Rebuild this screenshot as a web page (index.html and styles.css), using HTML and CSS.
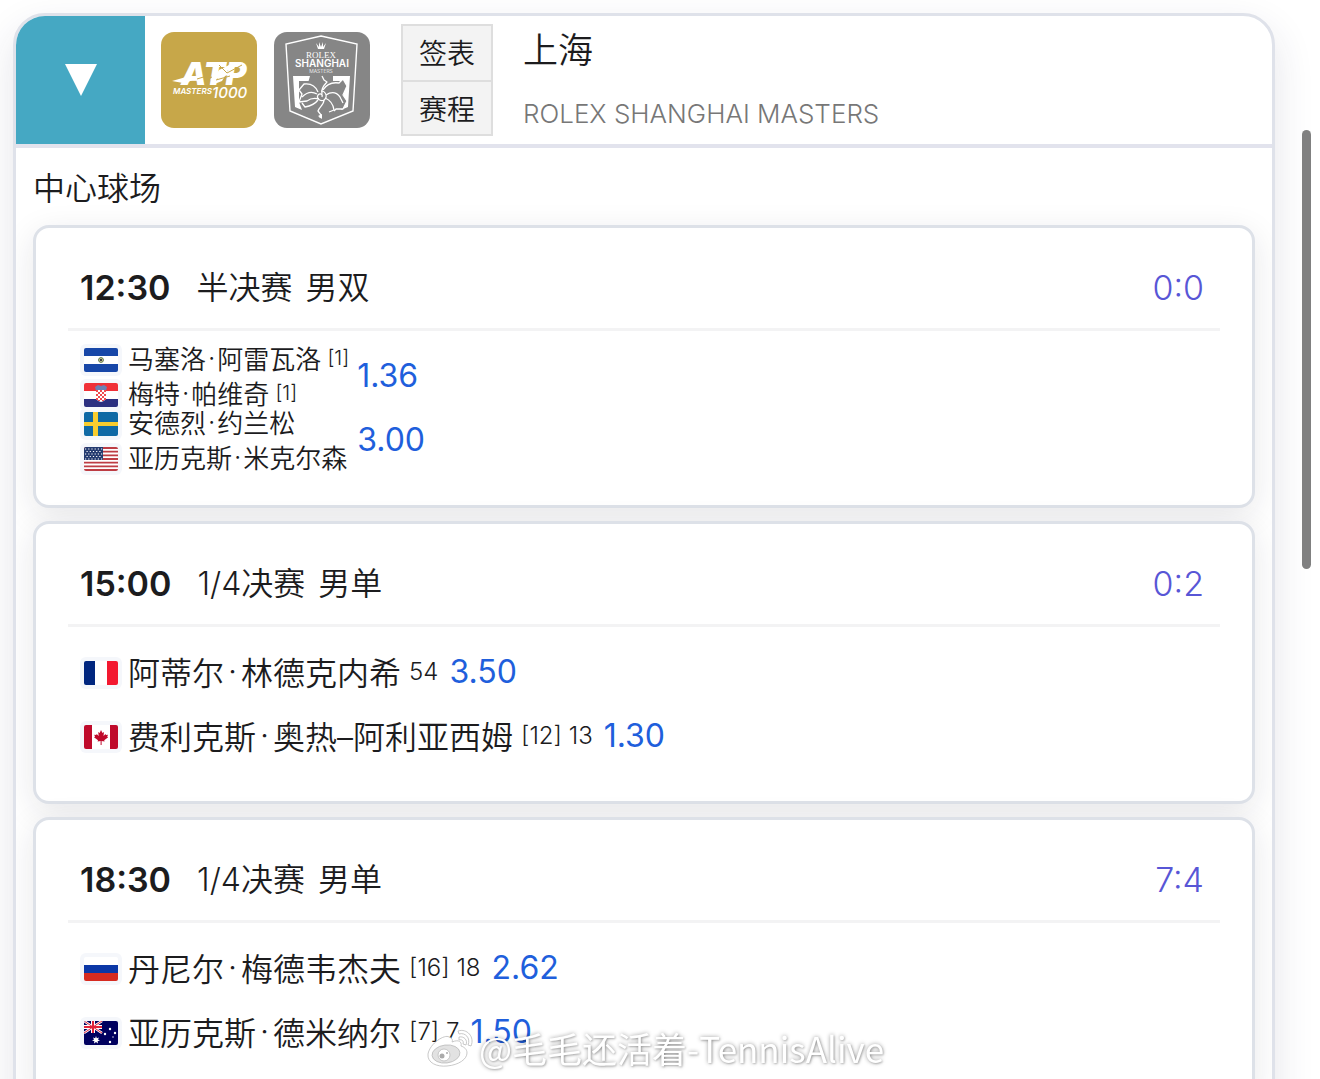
FILE: index.html
```html
<!DOCTYPE html>
<html lang="zh-CN">
<head>
  <meta charset="UTF-8">
  <meta name="viewport" content="width=device-width, initial-scale=1.0">
  <title>上海 - ROLEX SHANGHAI MASTERS</title>
  <link rel="stylesheet" href="styles.css">
</head>
<body>
  <div class="page">
    <div class="tour">
      <div class="tour-header">
        <button type="button" class="toggle" aria-label="收起">
          <svg width="32" height="32" viewBox="0 0 32 32"><path d="M0 0h32L16 32z" fill="#fff"/></svg>
        </button>
        <div class="logos">
          <svg class="logo" viewBox="0 0 96 96">
            <rect width="96" height="96" rx="13" fill="#c7a749"/>
            <g fill="#fff" font-family="Inter, sans-serif" font-style="italic">
              <text x="20" y="53" font-size="32" font-weight="900">ATP</text>
              <text x="12" y="62" font-size="8" font-weight="600">MASTERS</text>
              <text x="51" y="66" font-size="15" font-weight="500">1000</text>
            </g>
            <path d="M11 49l14-4 11 1-9 4-5 1zM58 38l10-5 5 1-7 5 6 2-8 3-3 5-10 4 6-7-8 2 6-5z" fill="#fff"/>
            <path d="M36 47l13-4-6 5 8-3M58 33l8 8 15-8M55 48l14-4" fill="none" stroke="#c7a749"/>
          </svg>
          <svg class="logo" viewBox="0 0 96 96">
            <rect width="96" height="96" rx="13" fill="#868686"/>
            <path d="M47 4l36 8-4 67-32 13-31-13-4-67z" fill="none" stroke="#fff" stroke-width="1.4"/>
            <path d="M44 17l-2-6 3 4 0-5 2 5 2-5 0 5 3-4-2 6z" fill="#fff"/>
            <g fill="#fff" text-anchor="middle">
              <text x="47" y="26" font-family="Liberation Serif, serif" font-size="9">ROLEX</text>
              <text x="48" y="35" font-family="Inter, sans-serif" font-size="10" font-weight="600">SHANGHAI</text>
              <text x="47" y="41" font-family="Inter, sans-serif" font-size="5">MASTERS</text>
            </g>
            <path d="M19 44h17v5H25v21l3 8-7-3zM76 44H59v5h11v21l-3 8 7-3z" fill="#fff"/>
            <g fill="#868686" stroke="#fff" stroke-width="1.300" stroke-linejoin="round">
              <path d="M47 60c-1-7-6-9-13-9l2-7h12l2 4 3 2-3 4z" stroke="none"/>
              <path d="M48 44l2 4 3 2c-5 5-6 8-5 12M49 58c3-5 9-8 16-7l4-4 4 7-4 9 4 6-4 8-7 0-2 2"/>
              <path d="M52 63c6-4 12-3 15 4l2 4M51 66c5 2 8 5 9 12l-5 2"/>
              <path d="M44 60c-2-5-6-9-14-8l-5 6 3 4-3 8 8-1c4-3 8-3 12-2M43 62c-5-3-10-2-15 3"/>
              <path d="M44 68c-3 4-7 6-13 7l-3-4M50 68c0 5-5 7-6 11l3 4-1 3"/>
            </g>
            <path d="M47 59c5 0 7 6 3 9-4 2-8-2-6-5 2-2 5-1 4 2" fill="none" stroke="#fff" stroke-width="1.200"/>
            <path d="M44 84l4-2 0 5z" fill="#fff"/>
          </svg>
        </div>
        <div class="links">
          <button type="button">签表</button>
          <button type="button">赛程</button>
        </div>
        <div class="names">
          <div class="city">上海</div>
          <div class="full-name">ROLEX SHANGHAI MASTERS</div>
        </div>
      </div>

      <div class="court">
        <div class="court-name">中心球场</div>

        <div class="match">
          <div class="match-header">
            <span class="time">12:30</span>
            <span class="round">半决赛</span>
            <span class="type">男双</span>
            <span class="h2h">0:0</span>
          </div>
          <div class="players doubles">
            <div class="team">
              <div class="player">
                <svg class="flag" viewBox="0 0 34 24"><path fill="#1747a8" d="M0 0h34v24H0z"/><path fill="#fff" d="M0 8h34v8H0z"/><circle cx="17" cy="12" r="2.4" fill="#d8d29a" stroke="#56724a"/><path d="M16 11h2v2h-2z" fill="#444"/></svg>
                马塞洛<i>·</i>阿雷瓦洛<small>[1]</small>
              </div>
              <div class="player">
                <svg class="flag" viewBox="0 0 34 24"><path fill="#fff" d="M0 0h34v24H0z"/><path fill="#f03038" d="M0 0h34v8H0z"/><path fill="#2b2f80" d="M0 16h34v8H0z"/><path d="M11 4l3-2 3 1 3-1 3 2-1 4H12z" fill="#6c80b4"/><path d="M12 7h10v7q0 4-5 5-5-1-5-5z" fill="#fff"/><path d="M12 7h2v2h-2zm4 0h2v2h-2zm4 0h2v2h-2zm-6 2h2v2h-2zm4 0h2v2h-2zm-6 2h2v2h-2zm4 0h2v2h-2zm4 0h2v2h-2zm-6 2h2v2h-2zm4 0h2v2h-2zm-6 2h2v2h-2zm4 0h2v2h-2zm4 0h2v2h-2zm-6 2h2v1h-2zm4 0h2v1h-2z" fill="#ef4b50"/></svg>
                梅特<i>·</i>帕维奇<small>[1]</small>
              </div>
            </div>
            <a href="#" class="odds">1.36</a>
            <div class="team">
              <div class="player">
                <svg class="flag" viewBox="0 0 34 24"><path fill="#0f69a5" d="M0 0h34v24H0z"/><path fill="#f7cc2e" d="M9 0h5v24H9z"/><path fill="#f7cc2e" d="M0 10h34v4H0z"/></svg>
                安德烈<i>·</i>约兰松
              </div>
              <div class="player">
                <svg class="flag" viewBox="0 0 34 24"><path fill="#fff" d="M0 0h34v24H0z"/><path d="M0 1h34M0 4.7h34M0 8.4h34M0 12h34M0 15.7h34M0 19.4h34M0 23h34" stroke="#bd3d44" stroke-width="1.8"/><path fill="#253b70" d="M0 0h19v13H0z"/><path d="M1 2h18M2.500 4.500h16M1 7h18M2.500 9.500h16M1 12h18" stroke="#fff" stroke-width="1.2" stroke-dasharray="1.200 2"/></svg>
                亚历克斯<i>·</i>米克尔森
              </div>
            </div>
            <a href="#" class="odds">3.00</a>
          </div>
        </div>

        <div class="match">
          <div class="match-header">
            <span class="time">15:00</span>
            <span class="round">1/4决赛</span>
            <span class="type">男单</span>
            <span class="h2h">0:2</span>
          </div>
          <div class="players">
            <div class="player">
              <svg class="flag" viewBox="0 0 34 24"><path fill="#fff" d="M0 0h34v24H0z"/><path fill="#00267f" d="M0 0h11v24H0z"/><path fill="#f31830" d="M23 0h11v24H23z"/></svg>
              阿蒂尔<i>·</i>林德克内希<small>54</small>
              <a href="#" class="odds">3.50</a>
            </div>
            <div class="player">
              <svg class="flag" viewBox="0 0 34 24"><path fill="#fff" d="M0 0h34v24H0z"/><path fill="#bf0a2b" d="M0 0h8v24H0zM26 0h8v24h-8z"/><path fill="#bf0a2b" d="M17 5l1.500 3 1.500-1-.5 4 2-2 .5 1 2-.3-.8 2 1 .5-4 3 .4 1.400-3-.5V20h-1v-3.900l-3 .5.400-1.400-4-3 1-.5-.8-2 2 .3.500-1 2 2-.5-4 1.500 1z"/></svg>
              费利克斯<i>·</i>奥热–阿利亚西姆<small>[12] 13</small>
              <a href="#" class="odds">1.30</a>
            </div>
          </div>
        </div>

        <div class="match">
          <div class="match-header">
            <span class="time">18:30</span>
            <span class="round">1/4决赛</span>
            <span class="type">男单</span>
            <span class="h2h">7:4</span>
          </div>
          <div class="players">
            <div class="player">
              <svg class="flag" viewBox="0 0 34 24"><path fill="#fff" d="M0 0h34v24H0z"/><path fill="#0b37a6" d="M0 8h34v8H0z"/><path fill="#d62b20" d="M0 16h34v8H0z"/></svg>
              丹尼尔<i>·</i>梅德韦杰夫<small>[16] 18</small>
              <a href="#" class="odds">2.62</a>
            </div>
            <div class="player">
              <svg class="flag" viewBox="0 0 34 24"><path fill="#00005f" d="M0 0h34v24H0z"/><path d="M0 0l18 12M18 0L0 12" stroke="#fff" stroke-width="2.600"/><path d="M9 0v12M0 6h18" stroke="#fff" stroke-width="4"/><path d="M0 0l18 12M18 0L0 12" stroke="#e0233a"/><path d="M9 0v12M0 6h18" stroke="#e0233a" stroke-width="2"/><g fill="#fff"><path d="M12 15l.8 2.200 2.200-.8-1 2.100 2 1.200-2.300.4.200 2.300-1.900-1.500-1.900 1.500.2-2.300-2.300-.4 2-1.200-1-2.100 2.200.8z"/><circle cx="26" cy="8" r="1.200"/><circle cx="21" cy="13" r="1.200"/><circle cx="31" cy="12" r="1.200"/><circle cx="26" cy="21" r="1.200"/><circle cx="29" cy="16" r=".7"/></g></svg>
              亚历克斯<i>·</i>德米纳尔<small>[7] 7</small>
              <a href="#" class="odds">1.50</a>
            </div>
          </div>
        </div>
      </div>
    </div>
  </div>

  <div class="scrollbar"></div>

  <div class="watermark">
    <svg width="48" height="42" viewBox="0 0 48 42">
      <g fill="#fff" stroke="#bbb" stroke-width=".8">
        <path d="M22 10c-4-3-19 6-21 17-1 9 9 13 19 12 12-1 20-7 20-13 0-4-3-6-6-7 1-4-2-7-9-4 1-2 0-4-3-5z"/>
        <ellipse cx="19" cy="27" rx="14" ry="9" fill="#e2e2e2" transform="rotate(-7 19 27)"/>
        <circle cx="17" cy="28" r="6"/>
        <path d="M31 4c9-3 17 6 13 15l-3-1c3-7-3-13-9-11zM32 10c5-1 9 3 7 8l-3-1c1-3-1-5-4-4z"/>
      </g>
      <circle cx="15" cy="29" r="2.500" fill="#aaa"/><circle cx="20" cy="26" r="1" fill="#aaa"/>
    </svg>
    <span>@毛毛还活着-TennisAlive</span>
  </div>
</body>
</html>
```
FILE: styles.css
```css
* {
  box-sizing: border-box;
}
body {
  font-family: Inter, 'Noto Sans CJK SC', sans-serif;
  font-weight: 350;
  margin: 0;
  background-color: #fff;
  color: #1c1c1e;
}
button {
  font: inherit;
  color: inherit;
  border: none;
  padding: 0;
  cursor: pointer;
}
a {
  text-decoration: none;
}
.page {
  height: 100vh;
  overflow: hidden;
  padding: 13px 45px 0 13px;
}
.tour {
  border: 3px solid #dfe2ea;
  border-radius: 32px;
  overflow: hidden;
  background-color: #fff;
  box-shadow: 0 16px 40px rgba(40, 40, 80, 0.12);
}
.tour-header {
  display: flex;
  height: 132px;
  border-bottom: 4px solid #e2e3ed;
}
.toggle {
  width: 129px;
  background-color: #45a8c3;
}
.toggle svg {
  display: block;
  margin: 0 auto;
}
.logos {
  display: flex;
  gap: 17px;
  padding: 16px 15px 16px 16px;
}
.logo {
  width: 96px;
  height: 96px;
}
.links {
  display: flex;
  flex-direction: column;
  align-self: center;
  width: 92px;
  margin: 0 30px 0 16px;
  border: 2px solid #dedede;
}
.links button {
  height: 54px;
  padding-top: 2px;
  background-color: #f3f3f3;
  font-size: 28px;
  line-height: 52px;
}
.links button + button {
  border-top: 2px solid #dedede;
}
.names {
  padding-top: 2px;
  line-height: 64px;
}
.city {
  font-size: 35px;
}
.full-name {
  font-size: 26px;
  color: #777;
}
.court {
  padding: 0 17px 40px;
}
.court-name {
  padding-top: 4px;
  font-size: 32px;
  line-height: 73px;
}

/* match cards */
.match {
  height: 283px;
  margin-bottom: 13px;
  padding: 24px 32px;
  border: 3px solid #dde1e8;
  border-radius: 16px;
  background-color: #fff;
  box-shadow: 0 8px 32px rgba(30, 30, 50, 0.1);
}
.match-header {
  display: flex;
  align-items: center;
  height: 79px;
  padding: 0 16px 4px 12px;
  border-bottom: 3px solid #f3f3f4;
  font-size: 32px;
  line-height: 40px;
}
.time {
  font-size: 34px;
  font-weight: 600;
}
.round {
  margin-left: 26px;
}
.type {
  margin-left: 13px;
}
.h2h {
  margin-left: auto;
  font-size: 34px;
  color: #5856d6;
}
.players {
  padding: 12px 12px 0;
}
.player {
  display: flex;
  align-items: center;
  height: 64px;
  font-size: 32px;
}
.player i {
  margin: 0 4px;
  font-style: normal;
}
.player small {
  margin: 0 11px 0 8px;
  font-size: 24px;
}
.flag {
  flex: none;
  width: 42px;
  height: 32px;
  margin: 4px 6px 0 0;
  padding: 4px;
  border-radius: 6px;
  background-color: #f5f7fb;
}
.odds {
  font-size: 32px;
  font-weight: 400;
  color: #1f5fdc;
}
.doubles {
  display: grid;
  grid-template-columns: max-content 1fr;
  grid-auto-rows: 64px;
  align-items: center;
  column-gap: 8px;
}
.doubles .player {
  height: 35px;
  font-size: 26px;
}
.doubles .player i {
  margin: 0 2px;
}
.doubles small {
  margin: 0 0 0 6px;
  font-size: 20px;
}

/* thumb of the overlay scrollbar */
.scrollbar {
  position: fixed;
  top: 130px;
  right: 9px;
  width: 9px;
  height: 439px;
  border-radius: 5px;
  background-color: #808080;
}
.watermark {
  position: fixed;
  left: 427px;
  bottom: 8px;
  display: flex;
  align-items: center;
  gap: 4px;
  font-family: 'Noto Sans CJK SC', sans-serif;
  font-size: 35px;
  font-weight: 400;
  line-height: 46px;
  color: #fff;
  text-shadow: 0 0 4px rgba(0, 0, 0, 0.4), 1px 1px 2px rgba(0, 0, 0, 0.2);
}
```
